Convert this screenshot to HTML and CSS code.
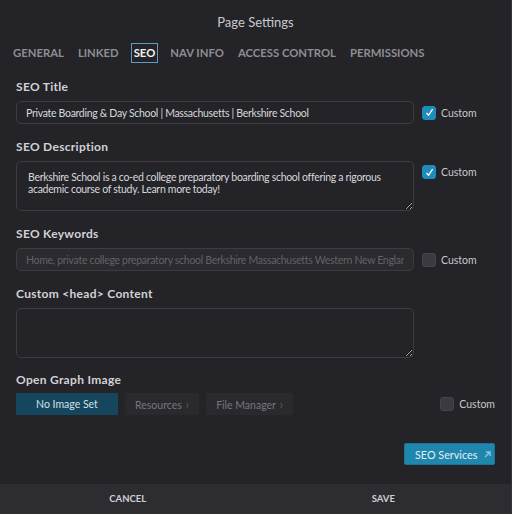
FILE: index.html
```html
<!DOCTYPE html>
<html>
<head>
<meta charset="utf-8">
<link rel="stylesheet" href="styles.css">
</head>
<body>
<div class="panel">
  <div class="main">
    <h1 class="title">Page Settings</h1>
    <nav class="tabs">
      <span class="tab">GENERAL</span>
      <span class="tab">LINKED</span>
      <span class="tab active">SEO</span>
      <span class="tab">NAV INFO</span>
      <span class="tab">ACCESS CONTROL</span>
      <span class="tab">PERMISSIONS</span>
    </nav>
    <div class="content">
      <div class="label">SEO Title</div>
      <div class="row">
        <input class="field" type="text" value="Private Boarding &amp; Day School | Massachusetts | Berkshire School">
        <label class="check"><span class="box on"><svg width="9" height="9" viewBox="0 0 9 9"><path d="M1.5 5 L3.6 7.3 L7.6 1.2" fill="none" stroke="#fff" stroke-width="1.3"/></svg></span>Custom</label>
      </div>

      <div class="label">SEO Description</div>
      <div class="row top">
        <textarea class="field area">Berkshire School is a co-ed college preparatory boarding school offering a rigorous academic course of study. Learn more today!</textarea>
        <label class="check"><span class="box on"><svg width="9" height="9" viewBox="0 0 9 9"><path d="M1.5 5 L3.6 7.3 L7.6 1.2" fill="none" stroke="#fff" stroke-width="1.3"/></svg></span>Custom</label>
      </div>

      <div class="label">SEO Keywords</div>
      <div class="row">
        <input class="field disabled" type="text" placeholder="Home, private college preparatory school Berkshire Massachusetts Western New England">
        <label class="check"><span class="box"></span>Custom</label>
      </div>

      <div class="label">Custom &lt;head&gt; Content</div>
      <div class="row top">
        <textarea class="field area"></textarea>
      </div>

      <div class="label og-label">Open Graph Image</div>
      <div class="og">
        <div class="og-buttons">
          <span class="btn primary">No Image Set</span>
          <span class="btn ghost">Resources <span class="chev">&#8250;</span></span>
          <span class="btn ghost">File Manager <span class="chev">&#8250;</span></span>
        </div>
        <label class="check"><span class="box"></span>Custom</label>
      </div>

      <div class="services-row">
        <span class="services">SEO Services
          <svg width="9" height="9" viewBox="0 0 9 9"><path d="M2 7 L7 2 M3 2 H7 V6" fill="none" stroke="#8fc6dc" stroke-width="1.4"/></svg>
        </span>
      </div>
    </div>
  </div>
  <footer class="footer">
    <span class="foot-btn">CANCEL</span>
    <span class="foot-btn">SAVE</span>
  </footer>
</div>
</body>
</html>
```
FILE: styles.css
```css
html, body {
  margin: 0;
  padding: 0;
  background: #232328;
  font-family: Lato, "Open Sans", sans-serif;
  color: #d6d6d8;
}
.panel {
  width: 512px;
  height: 514px;
  display: flex;
  flex-direction: column;
  box-sizing: border-box;
  border-right: 1px solid #34343a;
}
.main {
  flex: 1;
}
.title {
  margin: 0;
  padding-top: 13px;
  height: 20px;
  line-height: 18px;
  font-size: 13px;
  font-weight: 400;
  text-align: center;
  color: #c9c9cc;
}
.tabs {
  display: flex;
  gap: 14px;
  padding: 9px 0 0 13px;
  height: 22px;
  align-items: center;
}
.tab {
  font-size: 11.3px;
  font-weight: 700;
  color: #8e8e94;
  line-height: 16px;
}
.tab.active {
  color: #f2f2f2;
  outline: 1.5px solid #5d9dbd;
  outline-offset: 1px;
  padding: 0 1px;
}
.content {
  padding: 0 16px;
}
.label {
  font-size: 12px;
  font-weight: 700;
  letter-spacing: 0.3px;
  color: #d2d2d6;
  line-height: 16px;
  margin-top: 15px;
  margin-bottom: 6px;
}
.content > .label:first-child {
  margin-top: 15px;
}
.label.og-label {
  margin-top: 14px;
  margin-bottom: 5px;
}
.row {
  display: flex;
  align-items: center;
  gap: 8px;
}
.row.top {
  align-items: flex-start;
}
.row.top .check {
  margin-top: 4px;
}
.field {
  width: 398px;
  height: 23px;
  box-sizing: border-box;
  background: #232328;
  border: 1px solid #3c3c42;
  border-radius: 5px;
  padding: 0 9px;
  font-family: Lato, sans-serif;
  font-size: 10.5px;
  letter-spacing: -0.3px;
  color: #d8d8dc;
  outline: none;
  margin: 0;
}
.field.disabled {
  background: #2a2a2f;
}
.field::placeholder {
  color: #626268;
}
.area {
  height: 50px;
  padding: 10px 11px;
  line-height: 11.5px;
  resize: vertical;
  display: block;
}
.check {
  display: flex;
  align-items: center;
  gap: 5px;
  font-size: 10.5px;
  color: #c8c8cc;
}
.box {
  width: 14px;
  height: 14px;
  box-sizing: border-box;
  border-radius: 3px;
  background: #3a3a40;
  border: 1px solid #44444a;
  display: inline-flex;
  align-items: center;
  justify-content: center;
}
.box.on {
  background: #1f8dbb;
  border-color: #1f8dbb;
}
.og {
  display: flex;
  justify-content: space-between;
  align-items: center;
}
.og-buttons {
  display: flex;
  gap: 7px;
}
.btn {
  height: 22px;
  line-height: 22px;
  font-size: 10.5px;
  padding: 0 10px;
  border-radius: 1px;
}
.btn.primary {
  width: 102px;
  box-sizing: border-box;
  text-align: center;
  background: #16465e;
  color: #cfe0ea;
}
.btn.ghost {
  background: #2a2a2e;
  color: #76767c;
}
.chev {
  color: #55555a;
  font-size: 13px;
  margin-left: 1px;
}
.services-row {
  display: flex;
  justify-content: flex-end;
  margin-top: 28px;
}
.services {
  display: inline-flex;
  align-items: center;
  gap: 6px;
  height: 22px;
  width: 91px;
  box-sizing: border-box;
  padding: 0 0 0 10px;
  background: #1f86ae;
  border: 1px solid #1b7399;
  border-radius: 2px;
  font-size: 10.8px;
  color: #e4eef3;
}
.footer {
  height: 30px;
  background: #2c2c31;
  display: flex;
}
.foot-btn {
  flex: 1;
  text-align: center;
  line-height: 30px;
  font-size: 9.5px;
  font-weight: 700;
  color: #cfcfd3;
}
```
